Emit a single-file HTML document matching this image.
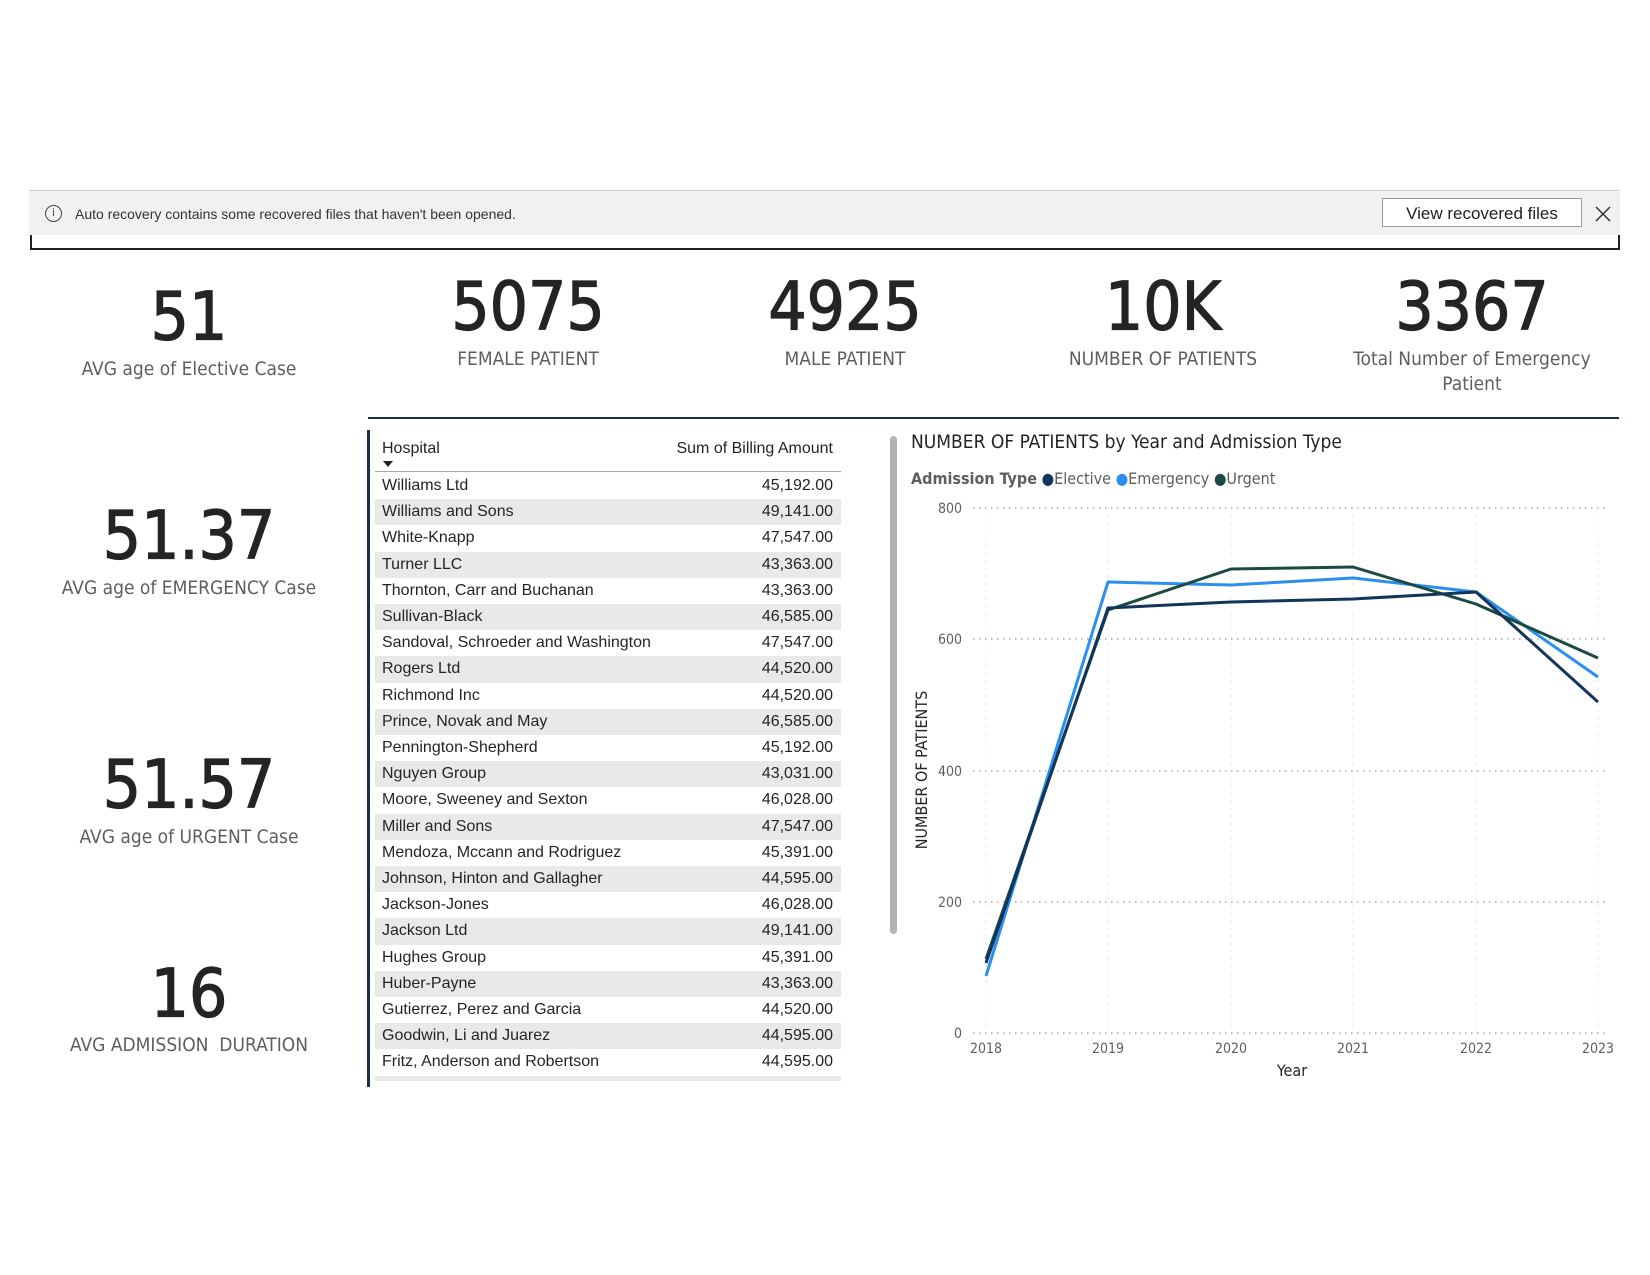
<!DOCTYPE html>
<html><head><meta charset="utf-8"><style>
*{margin:0;padding:0;box-sizing:border-box}
body{width:1650px;height:1275px;background:#fff;position:relative;overflow:hidden;font-family:"Liberation Sans",sans-serif;color:#252423}
.a{position:absolute}
.num{position:absolute;font-family:"DejaVu Sans Condensed","DejaVu Sans",sans-serif;font-weight:normal;-webkit-text-stroke:1.2px #252423;font-size:67px;letter-spacing:0px;color:#252423;text-align:center;width:300px;line-height:1;transform:translate(-150px,-50%)}
.lbl{position:absolute;font-family:"DejaVu Sans Condensed","DejaVu Sans",sans-serif;font-size:19px;color:#605e5c;text-align:center;width:300px;line-height:25px;transform:translate(-150px,-12px)}
.row{position:absolute;left:375px;width:466px;height:26.2px;font-size:16px;line-height:26px}
.row span{position:absolute}
.row .n{left:7px}.row .v{right:8px}
.g{background:#e9e9e9}
</style></head><body>
<div class="a" style="left:30px;top:226px;width:1590px;height:24px;border-left:2px solid #222;border-right:2px solid #222;border-bottom:2px solid #222"></div>
<div class="a" style="left:29px;top:190px;width:1591px;height:45px;background:#f1f1f1;border-top:1px solid #d0d0d0"></div>
<div class="a" style="left:45px;top:205px;width:17px;height:17px;border:1px solid #444;border-radius:50%;font-size:11px;line-height:15px;text-align:center;color:#444">i</div>
<div class="a" style="left:75px;top:206px;font-size:14px;color:#333;line-height:17px">Auto recovery contains some recovered files that haven't been opened.</div>
<div class="a" style="left:1382px;top:198px;width:200px;height:29px;border:1px solid #999;background:#fff;font-size:17px;line-height:29px;text-align:center;color:#222">View recovered files</div>
<svg class="a" style="left:1595px;top:206px" width="16" height="16"><path d="M1 1L15 15M15 1L1 15" stroke="#333" stroke-width="1.5"/></svg>

<div class="num" style="left:189px;top:317px">51</div><div class="lbl" style="left:189px;top:369px">AVG age of Elective Case</div>
<div class="num" style="left:528px;top:307px">5075</div><div class="lbl" style="left:528px;top:359px">FEMALE PATIENT</div>
<div class="num" style="left:845px;top:307px">4925</div><div class="lbl" style="left:845px;top:359px">MALE PATIENT</div>
<div class="num" style="left:1163px;top:307px">10K</div><div class="lbl" style="left:1163px;top:359px">NUMBER OF PATIENTS</div>
<div class="num" style="left:1472px;top:307px">3367</div><div class="lbl" style="left:1472px;top:359px">Total Number of Emergency<br>Patient</div>
<div class="num" style="left:189px;top:536px">51.37</div><div class="lbl" style="left:189px;top:588px">AVG age of EMERGENCY Case</div>
<div class="num" style="left:189px;top:785px">51.57</div><div class="lbl" style="left:189px;top:837px">AVG age of URGENT Case</div>
<div class="num" style="left:189px;top:994px">16</div><div class="lbl" style="left:189px;top:1045px">AVG ADMISSION &nbsp;DURATION</div>

<div class="a" style="left:368px;top:417px;width:1251px;height:2px;background:#1b2f4a"></div>
<div class="a" style="left:367px;top:430px;width:3px;height:657px;background:#1b2f4a"></div>

<div class="a" style="left:382px;top:440px;font-size:16px">Hospital</div>
<div class="a" style="left:383px;top:461px;width:0;height:0;border-left:5px solid transparent;border-right:5px solid transparent;border-top:6px solid #222"></div>
<div class="a" style="left:600px;top:440px;width:233px;text-align:right;font-size:16px">Sum of Billing Amount</div>
<div class="a" style="left:375px;top:471px;width:466px;height:1px;background:#8fb3a7"></div>
<div class="a" style="left:0;top:473px;width:1650px;height:608px;overflow:hidden">
<div style="position:relative;top:-471px">
<div class="row" style="top:471px"><span class="n">Williams Ltd</span><span class="v">45,192.00</span></div>
<div class="row g" style="top:497.2px"><span class="n">Williams and Sons</span><span class="v">49,141.00</span></div>
<div class="row" style="top:523.4px"><span class="n">White-Knapp</span><span class="v">47,547.00</span></div>
<div class="row g" style="top:549.6px"><span class="n">Turner LLC</span><span class="v">43,363.00</span></div>
<div class="row" style="top:575.8px"><span class="n">Thornton, Carr and Buchanan</span><span class="v">43,363.00</span></div>
<div class="row g" style="top:602px"><span class="n">Sullivan-Black</span><span class="v">46,585.00</span></div>
<div class="row" style="top:628.2px"><span class="n">Sandoval, Schroeder and Washington</span><span class="v">47,547.00</span></div>
<div class="row g" style="top:654.4px"><span class="n">Rogers Ltd</span><span class="v">44,520.00</span></div>
<div class="row" style="top:680.6px"><span class="n">Richmond Inc</span><span class="v">44,520.00</span></div>
<div class="row g" style="top:706.8px"><span class="n">Prince, Novak and May</span><span class="v">46,585.00</span></div>
<div class="row" style="top:733px"><span class="n">Pennington-Shepherd</span><span class="v">45,192.00</span></div>
<div class="row g" style="top:759.2px"><span class="n">Nguyen Group</span><span class="v">43,031.00</span></div>
<div class="row" style="top:785.4px"><span class="n">Moore, Sweeney and Sexton</span><span class="v">46,028.00</span></div>
<div class="row g" style="top:811.6px"><span class="n">Miller and Sons</span><span class="v">47,547.00</span></div>
<div class="row" style="top:837.8px"><span class="n">Mendoza, Mccann and Rodriguez</span><span class="v">45,391.00</span></div>
<div class="row g" style="top:864px"><span class="n">Johnson, Hinton and Gallagher</span><span class="v">44,595.00</span></div>
<div class="row" style="top:890.2px"><span class="n">Jackson-Jones</span><span class="v">46,028.00</span></div>
<div class="row g" style="top:916.4px"><span class="n">Jackson Ltd</span><span class="v">49,141.00</span></div>
<div class="row" style="top:942.6px"><span class="n">Hughes Group</span><span class="v">45,391.00</span></div>
<div class="row g" style="top:968.8px"><span class="n">Huber-Payne</span><span class="v">43,363.00</span></div>
<div class="row" style="top:995px"><span class="n">Gutierrez, Perez and Garcia</span><span class="v">44,520.00</span></div>
<div class="row g" style="top:1021.2px"><span class="n">Goodwin, Li and Juarez</span><span class="v">44,595.00</span></div>
<div class="row" style="top:1047.4px"><span class="n">Fritz, Anderson and Robertson</span><span class="v">44,595.00</span></div>
<div class="row g" style="top:1073.6px"><span class="n">Farrell, Chavez and Terrell</span><span class="v">43,363.00</span></div>
</div></div>
<div class="a" style="left:890px;top:436px;width:7px;height:498px;background:#b3b3b3;border-radius:4px"></div>

<div class="a" style="left:911px;top:431px;font-family:'DejaVu Sans Condensed','DejaVu Sans',sans-serif;font-size:19px;color:#252423">NUMBER OF PATIENTS by Year and Admission Type</div>
<div class="a" style="left:911px;top:469px;font-family:'DejaVu Sans Condensed','DejaVu Sans',sans-serif;font-size:16px;color:#605e5c;white-space:nowrap">
<b>Admission Type</b> <span style="color:#12355b">●</span>Elective <span style="color:#2b8ff0">●</span>Emergency <span style="color:#1c4a42">●</span>Urgent</div>
<svg class="a" style="left:0;top:0" width="1650" height="1275">
<g stroke="#999" stroke-width="1.3" stroke-dasharray="1.5 4.5">
<line x1="973" y1="508" x2="1609" y2="508"/><line x1="973" y1="639" x2="1609" y2="639"/>
<line x1="973" y1="771" x2="1609" y2="771"/><line x1="973" y1="902" x2="1609" y2="902"/>
<line x1="973" y1="1033" x2="1609" y2="1033"/>
</g>
<g stroke="#ddd" stroke-width="1" stroke-dasharray="1.5 6">
<line x1="986" y1="508" x2="986" y2="1033"/><line x1="1108" y1="508" x2="1108" y2="1033"/>
<line x1="1231" y1="508" x2="1231" y2="1033"/><line x1="1353" y1="508" x2="1353" y2="1033"/>
<line x1="1476" y1="508" x2="1476" y2="1033"/><line x1="1598" y1="508" x2="1598" y2="1033"/>
</g>
<g font-family="DejaVu Sans Condensed, DejaVu Sans, sans-serif" font-size="14" fill="#605e5c">
<text x="962" y="513" text-anchor="end">800</text><text x="962" y="644" text-anchor="end">600</text>
<text x="962" y="776" text-anchor="end">400</text><text x="962" y="907" text-anchor="end">200</text>
<text x="962" y="1038" text-anchor="end">0</text>
<text x="986" y="1053" text-anchor="middle">2018</text><text x="1108" y="1053" text-anchor="middle">2019</text>
<text x="1231" y="1053" text-anchor="middle">2020</text><text x="1353" y="1053" text-anchor="middle">2021</text>
<text x="1476" y="1053" text-anchor="middle">2022</text><text x="1598" y="1053" text-anchor="middle">2023</text>
<text x="1292" y="1076" text-anchor="middle" font-size="16" fill="#252423">Year</text>
<text transform="translate(927,770) rotate(-90)" text-anchor="middle" font-size="16" fill="#252423">NUMBER OF PATIENTS</text>
</g>
<g fill="none" stroke-width="3" stroke-linejoin="round">
<polyline stroke="#2b8ff0" points="986,976 1108,582 1231,585 1353,578 1476,592 1598,677"/>
<polyline stroke="#1c4a42" points="986,959 1108,610 1231,569 1353,567 1476,604 1598,658"/>
<polyline stroke="#12355b" points="986,963 1108,608 1231,602 1353,599 1476,592 1598,702"/>
</g>
</svg>
</body></html>
